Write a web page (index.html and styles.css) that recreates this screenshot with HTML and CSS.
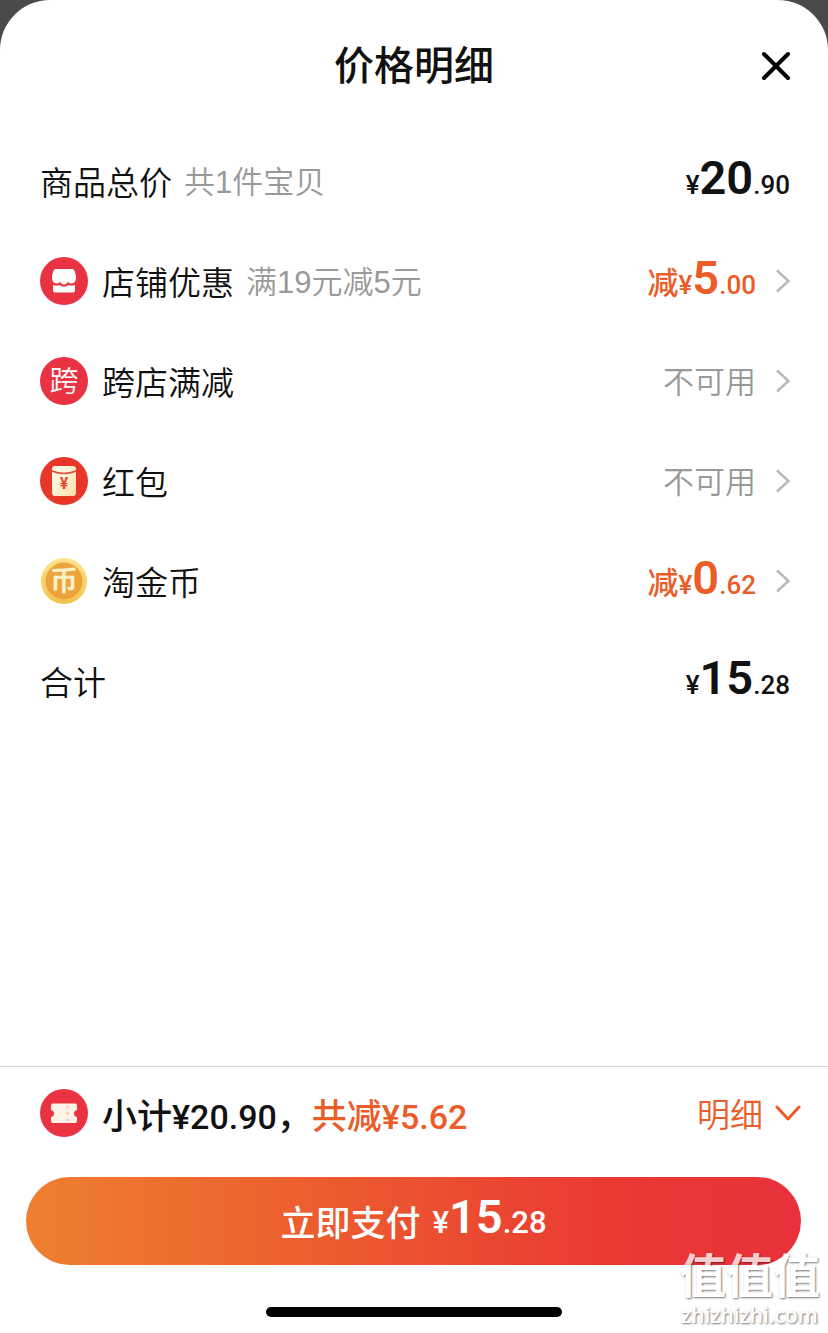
FILE: index.html
```
<!DOCTYPE html>
<html lang="zh-CN">
<head>
  <meta charset="UTF-8" />
  <meta name="viewport" content="width=device-width, initial-scale=1.0">
  <title>价格明细</title>
  <link rel="stylesheet" href="styles.css">
</head>
<body>
  <div class="sheet">
    <header class="header">
      <h1>价格明细</h1>
      <button class="close-btn" aria-label="关闭">
        <svg width="30" height="30" viewBox="0 0 30 30"><path d="M3 3L27 27M27 3L3 27" fill="none" stroke="#000" stroke-width="4" stroke-linecap="round"/></svg>
      </button>
    </header>

    <main class="list">
      <div class="row">
        <span class="label">商品总价</span>
        <span class="hint">共1件宝贝</span>
        <span class="value price"><span class="small">¥</span><span class="big">20</span><span class="small">.90</span></span>
      </div>

      <div class="row">
        <svg class="icon" viewBox="0 0 48 48">
          <circle cx="24" cy="24" r="24" fill="#e93342"/>
          <path d="M16 12H32Q34 12 34.6 14L36 19Q36.500 26 32 26.500Q29.500 26.500 28 25Q26 27.500 24 27.500Q22 27.500 20 25Q18.500 26.500 16 26.500Q11.500 26 12 19L13.400 14Q14 12 16 12Z" fill="#fff"/>
          <path d="M13 28Q16 29.500 19.500 28Q24 31.500 28.500 28Q32 29.500 35 28V33Q35 35.500 33 35.500H15Q13 35.500 13 33Z" fill="#fff"/>
        </svg>
        <span class="label">店铺优惠</span>
        <span class="hint">满19元减5元</span>
        <button class="value discount">
          <span class="price"><span class="cut">减</span><span class="small">¥</span><span class="big">5</span><span class="small">.00</span></span>
          <svg class="arrow" viewBox="0 0 14 24"><path d="M1 1.500L12.500 12L1 22.500" fill="none" stroke="#b8b8b8" stroke-width="2.500"/></svg>
        </button>
      </div>

      <div class="row">
        <span class="icon icon-text">跨</span>
        <span class="label">跨店满减</span>
        <button class="value">
          <span class="hint">不可用</span>
          <svg class="arrow" viewBox="0 0 14 24"><path d="M1 1.500L12.500 12L1 22.500" fill="none" stroke="#b8b8b8" stroke-width="2.500"/></svg>
        </button>
      </div>

      <div class="row">
        <svg class="icon" viewBox="0 0 48 48">
          <defs>
            <linearGradient id="paper" x1="0" y1="0" x2="1" y2="1"><stop offset="0" stop-color="#fffdf0"/><stop offset="1" stop-color="#fbe0a8"/></linearGradient>
          </defs>
          <circle cx="24" cy="24" r="24" fill="#e83629"/>
          <rect x="12" y="9" width="24" height="30" rx="3" fill="url(#paper)"/>
          <path d="M12 14Q24 19 36 14" fill="none" stroke="#e04a38" stroke-width="1.500"/>
          <text class="packet-sign" x="24" y="32" text-anchor="middle" fill="#e04a38">¥</text>
        </svg>
        <span class="label">红包</span>
        <button class="value">
          <span class="hint">不可用</span>
          <svg class="arrow" viewBox="0 0 14 24"><path d="M1 1.500L12.500 12L1 22.500" fill="none" stroke="#b8b8b8" stroke-width="2.500"/></svg>
        </button>
      </div>

      <div class="row">
        <svg class="icon" viewBox="0 0 48 48">
          <defs>
            <linearGradient id="rim" x1="0" y1="0" x2="0" y2="1"><stop offset="0" stop-color="#fbe58d"/><stop offset="1" stop-color="#f1c34d"/></linearGradient>
          </defs>
          <circle cx="24" cy="24" r="23" fill="url(#rim)"/>
          <circle cx="24" cy="24" r="18.500" fill="#eca33b"/>
          <text class="coin-sign" x="24" y="34" text-anchor="middle">币</text>
        </svg>
        <span class="label">淘金币</span>
        <button class="value discount">
          <span class="price"><span class="cut">减</span><span class="small">¥</span><span class="big">0</span><span class="small">.62</span></span>
          <svg class="arrow" viewBox="0 0 14 24"><path d="M1 1.500L12.500 12L1 22.500" fill="none" stroke="#b8b8b8" stroke-width="2.500"/></svg>
        </button>
      </div>

      <div class="row">
        <span class="label">合计</span>
        <span class="value price"><span class="small">¥</span><span class="big">15</span><span class="small">.28</span></span>
      </div>
    </main>

    <footer class="footer">
      <div class="summary">
        <svg class="icon" viewBox="0 0 48 48">
          <circle cx="24" cy="24" r="24" fill="#e93342"/>
          <path d="M13 14.500H35Q37 14.500 37 16.500V21Q34 21.500 34 24.500Q34 27.500 37 28V32Q37 34 35 34H13Q11 34 11 32V28Q14 27.500 14 24.500Q14 21.500 11 21V16.500Q11 14.500 13 14.500Z" fill="#fdf3e6"/>
          <g fill="#f3cfc4"><circle cx="27.500" cy="18" r="1.600"/><circle cx="27.500" cy="24.500" r="1.600"/><circle cx="27.500" cy="31" r="1.600"/></g>
        </svg>
        <span class="subtotal">小计<span class="num">¥20.90</span>，</span>
        <span class="saved">共减<span class="num">¥5.62</span></span>
        <button class="detail-btn">明细
          <svg width="26" height="18" viewBox="0 0 26 18"><path d="M2 3L13 15L24 3" fill="none" stroke="#ea5c28" stroke-width="3" stroke-linecap="round" stroke-linejoin="round"/></svg>
        </button>
      </div>
      <button class="pay-btn">
        <span>立即支付</span>
        <span class="price"><span class="small">¥</span><span class="big">15</span><span class="small">.28</span></span>
      </button>
      <div class="home-bar"></div>
    </footer>

    <div class="watermark">
      <div class="watermark-name">值值值</div>
      <div class="watermark-site">zhizhizhi.com</div>
    </div>
  </div>
</body>
</html>
```
FILE: styles.css
```
* {
  box-sizing: border-box;
}
body {
  margin: 0;
  background-color: #4a4a4a;
  font-family: "Liberation Sans", "Noto Sans CJK SC", sans-serif;
  color: #111;
}
button {
  padding: 0;
  border: none;
  background: none;
  font-family: inherit;
  color: inherit;
  cursor: pointer;
}
svg {
  display: block;
  flex-shrink: 0;
}
.sheet {
  position: relative;
  display: flex;
  flex-direction: column;
  min-height: 100vh;
  background-color: #fff;
  border-radius: 50px 50px 0 0;
}

/* header */
.header {
  display: grid;
  grid-template-columns: 1fr auto 1fr;
  align-items: center;
  height: 131px;
  padding: 0 37px;
}
h1 {
  grid-column: 2;
  margin: 0;
  font-size: 40px;
  line-height: 58px;
  font-weight: 500;
}
.close-btn {
  justify-self: end;
}

/* price list */
.list {
  flex: 1;
  padding: 0 38px 0 40px;
}
.row {
  display: flex;
  align-items: center;
  height: 100px;
}
.icon {
  width: 48px;
  height: 48px;
  margin-right: 14px;
}
.icon-text {
  border-radius: 50%;
  background-color: #e93342;
  color: #fff;
  font-size: 29px;
  line-height: 50px;
  font-weight: 350;
  text-align: center;
}
.packet-sign {
  font: bold 16px Roboto, sans-serif;
}
.coin-sign {
  font: bold 28px "Noto Sans CJK SC", sans-serif;
  fill: #fdf0c4;
}
.label {
  font-size: 33px;
  font-weight: 350;
}
.hint {
  margin-left: 12px;
  padding-bottom: 4px;
  font-size: 31px;
  font-weight: 350;
  color: #999;
}
.value {
  display: flex;
  align-items: center;
  margin-left: auto;
}
.arrow {
  width: 14px;
  height: 24px;
  margin-left: 20px;
}
.discount {
  color: #ea5c28;
}
.price {
  display: flex;
  align-items: baseline;
  font-family: Roboto, "Noto Sans CJK SC", sans-serif;
  line-height: 54px;
}
.cut {
  font-size: 31px;
  font-weight: 500;
}
.small {
  font-size: 26px;
  font-weight: 500;
}
.big {
  font-size: 47px;
  font-weight: 600;
}

/* bottom bar */
.footer {
  border-top: 1px solid #d8d8d8;
  padding: 0 27px 16px 26px;
}
.summary {
  display: flex;
  align-items: center;
  height: 92px;
  margin-bottom: 18px;
  padding-left: 14px;
  font-size: 35px;
  font-weight: 500;
}
.num {
  font-family: Roboto, sans-serif;
  font-size: 34px;
}
.saved {
  color: #ea5c28;
}
.detail-btn {
  display: flex;
  align-items: center;
  gap: 12px;
  margin-left: auto;
  font-size: 33px;
  font-weight: 350;
  color: #ea5c28;
}
.pay-btn {
  display: flex;
  justify-content: center;
  align-items: center;
  gap: 12px;
  width: 100%;
  height: 88px;
  padding-bottom: 2px;
  border-radius: 44px;
  background: linear-gradient(90deg, #ee7f30, #ec642e 30%, #ea3a33 75%, #e8313b);
  color: #fff;
  font-size: 35px;
  font-weight: 500;
}
.pay-btn .small {
  font-size: 31px;
}
.home-bar {
  width: 296px;
  height: 10px;
  margin: 42px auto 0;
  border-radius: 5px;
  background-color: #000;
}

/* site mark over the bottom corner */
.watermark {
  position: absolute;
  right: 8px;
  bottom: 5px;
  text-align: center;
  color: #fff;
  opacity: 0.75;
  text-shadow: 1px 1px 2px rgba(0, 0, 0, 0.7);
  pointer-events: none;
}
.watermark-name {
  font-size: 47px;
  line-height: 50px;
  font-weight: 700;
}
.watermark-site {
  font-family: "Open Sans", sans-serif;
  font-size: 21px;
  line-height: 26px;
  font-weight: 600;
}
```
